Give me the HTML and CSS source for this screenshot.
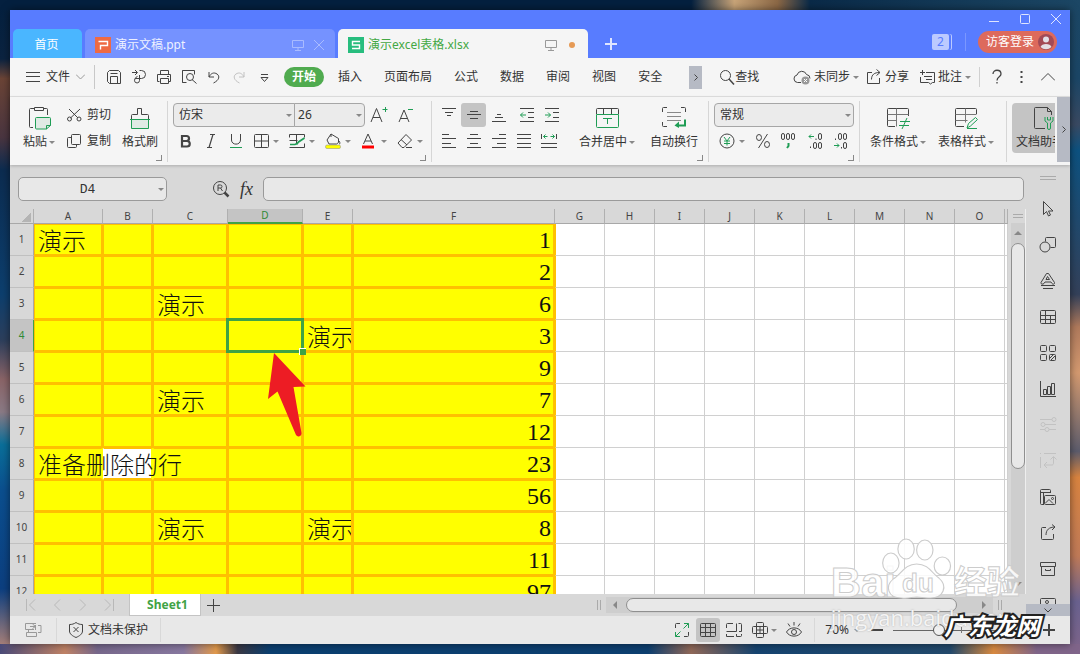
FILE: index.html
```html
<!DOCTYPE html>
<html lang="zh-CN">
<head>
    <meta charset="UTF-8">
    <meta name="viewport" content="width=device-width, initial-scale=1.0">
    <title>演示excel表格.xlsx</title>
    <link rel="stylesheet" href="styles.css">
</head>
<body>
<div class="window">
    <header class="titlebar">
        <div class="doc-tabs">
            <button class="doc-tab home">首页</button>
            <div class="doc-tab ppt">
                <svg width="16" height="16" viewBox="0 0 16 16"><path d="M0 0h16v16H0z" fill="#ee6a44" stroke="none"/><path d="M3.500 4.500h9v4h-7v4" stroke="#fff" stroke-width="1.400"/></svg>
                <span class="doc-name">演示文稿.ppt</span>
                <svg width="12" height="12" viewBox="0 0 12 12"><path d="M.5 1.500h11v7H.5zM6 8.500v3M3 11.500h6"/></svg>
                <svg width="10" height="10" viewBox="0 0 10 10"><path d="M0 0l10 10M10 0L0 10"/></svg>
            </div>
            <div class="doc-tab xlsx">
                <svg width="16" height="16" viewBox="0 0 16 16"><path d="M0 0h16v16H0z" fill="#27bd7e" stroke="none"/><path d="M12 4.500H4.500v3.500h7v3.500H4" stroke="#fff" stroke-width="1.400"/></svg>
                <span class="doc-name">演示excel表格.xlsx</span>
                <svg width="12" height="12" viewBox="0 0 12 12"><path d="M.5 1.500h11v7H.5zM6 8.500v3M3 11.500h6"/></svg>
                <span class="unsaved"></span>
            </div>
            <button class="new-tab" aria-label="新建"><svg width="12" height="12" viewBox="0 0 12 12"><path d="M6 0v12M0 6h12" stroke-width="2"/></svg></button>
        </div>
        <div class="title-right">
            <div class="win-controls">
                <button aria-label="最小化"><svg width="10" height="10" viewBox="0 0 10 10"><path d="M0 7.500h10"/></svg></button>
                <button aria-label="最大化"><svg width="10" height="10" viewBox="0 0 10 10"><rect x=".5" y=".5" width="9" height="9" rx="1"/></svg></button>
                <button aria-label="关闭"><svg width="10" height="10" viewBox="0 0 10 10"><path d="M0 0l10 10M10 0L0 10"/></svg></button>
            </div>
            <div class="account">
                <span class="badge">2</span>
                <button class="login">访客登录
                    <svg width="16" height="16" viewBox="0 0 16 16"><circle cx="8" cy="8" r="8" fill="#a34a56" stroke="none"/><circle cx="8" cy="5.500" r="3" fill="#e3dfe6" stroke="none"/><path d="M2.500 13c1-4 10-4 11 0a8 8 0 0 1-11 0z" fill="#e3dfe6" stroke="none"/></svg>
                </button>
            </div>
        </div>
    </header>

    <nav class="menubar">
        <button class="file-menu">
            <svg width="14" height="10" viewBox="0 0 14 10"><path d="M0 .5h14M0 4.500h14M0 9.500h14"/></svg>
            文件
            <svg class="soft" width="9" height="6" viewBox="0 0 9 6"><path d="M0 .5l4.500 4.500L9 .5"/></svg>
        </button>
        <div class="quick">
            <button aria-label="保存"><svg width="16" height="16" viewBox="0 0 16 16"><path d="M1.500 12.500v-9l2-2h9l2 2v11h-11zM4.500 14.500v-7h7v7M4.500 4.500h7"/></svg></button>
            <button aria-label="输出为PDF"><svg width="16" height="16" viewBox="0 0 16 16"><path d="M1 3.500h5M4 1l2.500 2.500L4 6M8.500 1.500h2a4 4 0 0 1 0 8h-6M6.500 7l-2.500 2.500M8.500 6v5.500a2.500 2.500 0 1 1-3-2.500"/></svg></button>
            <button aria-label="打印"><svg width="16" height="16" viewBox="0 0 16 16"><path d="M4.500 5.500v-4h8v4M3.500 12.500h-2v-7h13v7h-2M4.500 9.500h8v5h-8zM11 7.500h2"/></svg></button>
            <button aria-label="打印预览"><svg width="16" height="16" viewBox="0 0 16 16"><path d="M5.500 13.500h-4v-12h12v4M1.500 1.500v12M11 10.500l4.500 4"/><circle cx="9" cy="8" r="3.500"/></svg></button>
            <button aria-label="撤销"><svg width="16" height="16" viewBox="0 0 16 16"><path d="M3 3v5h5M3 8c2-4 5-5 8-3s2.500 6-3.500 9"/></svg></button>
            <button aria-label="恢复" class="off"><svg width="16" height="16" viewBox="0 0 16 16"><path d="M13 3v5H8M13 8c-2-4-5-5-8-3s-2.500 6 3.500 9"/></svg></button>
            <button aria-label="自定义"><svg width="16" height="16" viewBox="0 0 16 16"><path d="M5 5.500h7M5 8.500l3.500 4 3.500-4z"/></svg></button>
        </div>
        <div class="menus">
            <button class="current">开始</button>
            <button>插入</button>
            <button>页面布局</button>
            <button>公式</button>
            <button>数据</button>
            <button>审阅</button>
            <button>视图</button>
            <button>安全</button>
        </div>
        <button class="more-menus" aria-label="更多"><svg width="4" height="7" viewBox="0 0 4 7"><path d="M.5 .5l3 3-3 3"/></svg></button>
        <button class="find"><svg width="16" height="16" viewBox="0 0 16 16"><circle cx="6.500" cy="6.500" r="5"/><path d="M10 10l5 5.500" stroke-width="1.500"/></svg>查找</button>
        <div class="menu-right">
            <button><svg width="18" height="16" viewBox="0 0 18 16"><path d="M8 13.500H4.500a3.800 3.800 0 0 1-.5-7.500 5 5 0 0 1 9.500-.5 4 4 0 0 1 3.500 4"/><circle cx="12.500" cy="11.500" r="4" fill="#999" stroke="none"/><path d="M11 10l3 3M14 10l-3 3" stroke="#fff"/></svg><span>未同步</span><i class="caret"></i></button>
            <button><svg width="16" height="16" viewBox="0 0 16 16"><path d="M6 3.500H1.500v11h12V9M5.500 10.500c0-5 3-7 8-7M10.500 .5l3.500 3-3.500 3"/></svg><span>分享</span></button>
            <button><svg width="16" height="16" viewBox="0 0 16 16"><path d="M7 3.500h8.500v10h-2l-2 1.500-2-1.500h-8V8M1 3.500h5M3.500 1v5M5 7.500h8M7 10.500h6"/></svg><span>批注</span><i class="caret"></i></button>
            <span class="vline"></span>
            <button aria-label="帮助"><svg width="10" height="16" viewBox="0 0 10 16"><path d="M1 5c0-5 8-5 8 0 0 3-4 2.500-4 6.500M5 13v1.500" stroke-width="1.300"/></svg></button>
            <button aria-label="更多选项"><svg width="3" height="12" viewBox="0 0 3 12"><path d="M1.500 0v2M1.500 5v2M1.500 10v2" stroke-width="2"/></svg></button>
            <button aria-label="收起功能区"><svg width="14" height="8" viewBox="0 0 14 8"><path d="M0 7.500l7-7 7 7"/></svg></button>
        </div>
    </nav>

    <section class="ribbon">
        <div class="group clip launcher">
            <button class="big">
                <svg width="24" height="24" viewBox="0 0 24 24"><path d="M7 2.500H3.500a1 1 0 0 0-1 1v17a1 1 0 0 0 1 1H6M17 2.500h2.500a1 1 0 0 1 1 1V9M7.500 1.500h9v3h-9z"/><path class="g" d="M8.500 12.500a1 1 0 0 1 1-1h13a1 1 0 0 1 1 1v7l-4 3.500h-10a1 1 0 0 1-1-1z" fill="#dfeae4"/><path class="g" d="M23.500 19.500h-4V23"/></svg>
                <span>粘贴<i class="caret"></i></span>
            </button>
            <div class="stack">
                <button class="small"><svg width="16" height="16" viewBox="0 0 16 16"><path d="M3 2l9 9M14 2l-9.500 9"/><circle cx="3.500" cy="12" r="2"/><circle cx="13" cy="12" r="2"/></svg>剪切</button>
                <button class="small"><svg width="16" height="16" viewBox="0 0 16 16"><rect x="5.500" y="1.500" width="9" height="10" rx="1"/><path d="M5.500 4.500h-3a1 1 0 0 0-1 1v8a1 1 0 0 0 1 1h7a1 1 0 0 0 1-1v-2"/></svg>复制</button>
            </div>
            <button class="big">
                <svg width="24" height="24" viewBox="0 0 24 24"><path d="M3.500 13V9.500a1 1 0 0 1 1-1h5v-6h4v6h6a1 1 0 0 1 1 1V13"/><path class="g" d="M3.500 13.500h17v9h-17z" fill="#dfeae4"/><path class="g" d="M2 13.500h20"/></svg>
                <span>格式刷</span>
            </button>
        </div>
        <div class="group font launcher">
            <div class="stack">
                <div class="row">
                    <label class="combo name"><select aria-label="字体"><option>仿宋</option></select></label>
                    <label class="combo size"><select aria-label="字号"><option>26</option></select></label>
                    <button class="tool wide" aria-label="增大字号"><svg width="18" height="18" viewBox="0 0 18 18"><path d="M1 16L6.500 2.500 12 16M3 11.500h7"/><path class="g" d="M12.500 3.500h5M15.500 1v5"/></svg></button>
                    <button class="tool wide" aria-label="减小字号"><svg width="18" height="18" viewBox="0 0 18 18"><path d="M2 16L7 4l5 12M3.500 12.500h7"/><path class="g" d="M11 3.500h5"/></svg></button>
                </div>
                <div class="row">
                    <button class="tool" aria-label="加粗"><svg width="16" height="16" viewBox="0 0 16 16"><path d="M4 3h4.500a2.300 2.300 0 0 1 0 5H4zM4 8h5a2.500 2.500 0 0 1 0 5.500H4z" stroke-width="2.200"/></svg></button>
                    <button class="tool" aria-label="倾斜"><svg width="16" height="16" viewBox="0 0 16 16"><path d="M7 1.500h5M4 14.500h5M10 1.500l-4 13" stroke-width="1.200"/></svg></button>
                    <button class="tool" aria-label="下划线"><svg width="16" height="16" viewBox="0 0 16 16"><path d="M3.500 1v6c0 5.500 9 5.500 9 0V1"/><path class="g" d="M2 14.500h12"/></svg></button>
                    <button class="tool drop" aria-label="边框"><svg width="16" height="16" viewBox="0 0 16 16"><rect x="1.500" y="1.500" width="14" height="13" rx="1"/><path d="M8.500 1.500v13M1.500 8h14"/></svg><i class="caret"></i></button>
                    <button class="tool drop" aria-label="单元格样式"><svg width="16" height="16" viewBox="0 0 16 16"><path d="M15.500 4.500v-3H.5v3M.5 7.500h8M7.500 1.500v9M.5 14.500h15v-4"/><path class="g" d="M1 11.500h5l3-1.500M7.500 11.500l2-2.500 6-4" stroke-width="1.700"/></svg><i class="caret"></i></button>
                    <button class="tool drop" aria-label="填充颜色"><svg width="16" height="16" viewBox="0 0 16 16"><path d="M6 1l7.500 4.500v4l-2 1.500H4L2 7zM6 1v3M14 8c1.500 2 1 3 0 3"/><rect x=".5" y="12" width="15" height="3.500" rx="1.500" fill="#ff0" stroke="#888" stroke-width=".5"/></svg><i class="caret"></i></button>
                    <button class="tool drop" aria-label="字体颜色"><svg width="16" height="16" viewBox="0 0 16 16"><path d="M2.500 11L7 1l4.500 10M4 8h6"/><path d="M1 14h12" stroke="#f00" stroke-width="3"/></svg><i class="caret"></i></button>
                    <button class="tool drop" aria-label="清除"><svg width="16" height="16" viewBox="0 0 16 16"><path d="M9 1.500l5.500 5.500-7.500 7.500H5L1 10zM4 6.500l6 5.500M9 14.500h6"/></svg><i class="caret"></i></button>
                </div>
            </div>
        </div>
        <div class="group align launcher">
            <div class="stack">
                <div class="row">
                    <button class="tool" aria-label="顶端对齐"><svg width="16" height="16" viewBox="0 0 16 16"><path d="M1 1.500h14M4 5.500h8M6 8.500h4"/></svg></button>
                    <button class="tool on" aria-label="垂直居中"><svg width="16" height="16" viewBox="0 0 16 16"><path d="M4 4.500h8M1 7.500h14M4 11.500h8"/></svg></button>
                    <button class="tool" aria-label="底端对齐"><svg width="16" height="16" viewBox="0 0 16 16"><path d="M6 7.500h4M4 10.500h8M1 14.500h14"/></svg></button>
                    <button class="tool apart" aria-label="减少缩进"><svg width="16" height="16" viewBox="0 0 16 16"><path d="M1 1.500h14M9 5.500h6M9 10.500h6M1 14.500h14"/><path class="g" d="M7 8H1.500M4 5.500L1.500 8 4 10.500"/></svg></button>
                    <button class="tool" aria-label="增加缩进"><svg width="16" height="16" viewBox="0 0 16 16"><path d="M1 1.500h14M9 5.500h6M9 10.500h6M1 14.500h14"/><path class="g" d="M1 8h5.500M4 5.500L6.500 8 4 10.500"/></svg></button>
                </div>
                <div class="row">
                    <button class="tool" aria-label="左对齐"><svg width="16" height="16" viewBox="0 0 16 16"><path d="M1 1.500h7M1 5.500h14M1 10.500h9M1 14.500h14"/></svg></button>
                    <button class="tool" aria-label="水平居中"><svg width="16" height="16" viewBox="0 0 16 16"><path d="M4 1.500h8M1 5.500h14M4 10.500h8M1 14.500h14"/></svg></button>
                    <button class="tool" aria-label="右对齐"><svg width="16" height="16" viewBox="0 0 16 16"><path d="M8 1.500h7M1 5.500h14M6 10.500h9M1 14.500h14"/></svg></button>
                    <button class="tool" aria-label="两端对齐"><svg width="16" height="16" viewBox="0 0 16 16"><path d="M1 1.500h14M1 5.500h14M1 10.500h14M1 14.500h14"/></svg></button>
                    <button class="tool" aria-label="分散对齐"><svg width="16" height="16" viewBox="0 0 16 16"><path d="M.5 1v5M15.500 1v5M0 10.500h16M0 14.500h16"/><path class="g" d="M2.500 3.500h4M9.500 3.500h4M4.500 1.500l-2 2 2 2M11.500 1.500l2 2-2 2"/></svg></button>
                </div>
            </div>
            <button class="big">
                <svg width="24" height="24" viewBox="0 0 24 24"><path d="M1.500 8V3.500a1 1 0 0 1 1-1h20a1 1 0 0 1 1 1V8M8.500 2.500V8M16.500 2.500V8"/><path class="g" d="M1.500 8.500h22v12a1 1 0 0 1-1 1h-20a1 1 0 0 1-1-1zM8 12.500h9M12.500 12.500V18"/></svg>
                <span>合并居中<i class="caret"></i></span>
            </button>
            <button class="big">
                <svg width="24" height="24" viewBox="0 0 24 24"><path d="M.5 6V2.500a1 1 0 0 1 1-1H5M19 1.500h3.500a1 1 0 0 1 1 1V6M.5 16v3.500a1 1 0 0 0 1 1H5"/><path d="M5 6.500h14M5 10.500h14M5 14.500h14" stroke="#888"/><path class="g" d="M23 13.500v6h-7" stroke-width="2"/><path d="M12.500 19.500l4.500-4v6.500z" fill="#1f9d55" stroke="none"/></svg>
                <span>自动换行</span>
            </button>
        </div>
        <div class="group number launcher">
            <div class="stack">
                <div class="row">
                    <label class="combo format"><select aria-label="数字格式"><option>常规</option></select></label>
                </div>
                <div class="row">
                    <button class="tool drop" aria-label="货币"><svg width="16" height="16" viewBox="0 0 16 16"><circle cx="8" cy="8" r="7"/><path class="g" d="M5 4l3 4 3-4M8 8v4.500M5 8h6M5 10.500h6"/></svg><i class="caret"></i></button>
                    <button class="tool" aria-label="百分比"><svg width="16" height="16" viewBox="0 0 16 16"><ellipse cx="4" cy="4.500" rx="2.500" ry="3"/><ellipse cx="12" cy="11.500" rx="2.500" ry="3"/><path d="M12.500 1l-9 14"/></svg></button>
                    <button class="tool" aria-label="千位分隔"><svg width="16" height="16" viewBox="0 0 16 16"><rect x="1.500" y=".5" width="3" height="6" rx="1.500"/><rect x="6.500" y=".5" width="3" height="6" rx="1.500"/><rect x="11.500" y=".5" width="3" height="6" rx="1.500"/><path class="g" d="M8.500 10v3l-1.500 2" stroke-width="2"/></svg></button>
                    <button class="tool apart" aria-label="增加小数位数"><svg width="16" height="16" viewBox="0 0 16 16"><rect x="10.500" y=".5" width="3" height="6" rx="1.500"/><path d="M8 5.500v1.500M2.500 13.500V15"/><rect x="5.500" y="9.500" width="3" height="6" rx="1.500"/><rect x="10.500" y="9.500" width="3" height="6" rx="1.500"/><path class="g" d="M6 3.500H1M3 1.500l-2 2 2 2"/></svg></button>
                    <button class="tool" aria-label="减少小数位数"><svg width="16" height="16" viewBox="0 0 16 16"><rect x="5.500" y=".5" width="3" height="6" rx="1.500"/><rect x="10.500" y=".5" width="3" height="6" rx="1.500"/><path d="M2.500 5.500v1.500M8.500 14v1.500"/><rect x="10.500" y="9.500" width="3" height="6" rx="1.500"/><path class="g" d="M1 12.500h5M4 10.500l2 2-2 2"/></svg></button>
                </div>
            </div>
        </div>
        <div class="group style">
            <button class="big">
                <svg width="24" height="24" viewBox="0 0 24 24"><path d="M22.500 10V3.500a1 1 0 0 0-1-1h-19a1 1 0 0 0-1 1v16a1 1 0 0 0 1 1H9"/><path d="M1.500 8.500h21M1.500 14.500h9M10.500 2.500v18" stroke="#777"/><path class="g" d="M14 15.500h10M13 19.500h10M21 12l-5 11"/></svg>
                <span>条件格式<i class="caret"></i></span>
            </button>
            <button class="big">
                <svg width="24" height="24" viewBox="0 0 24 24"><path d="M22.500 8V3.500a1 1 0 0 0-1-1h-19a1 1 0 0 0-1 1v16a1 1 0 0 0 1 1H10"/><path d="M1.500 8.500h21M1.500 14.500h12M11.500 2.500v14" stroke="#777"/><path class="g" d="M13 22l1.500-4.500 7-6 2 2-7 6.500zM13 22.500h10"/></svg>
                <span>表格样式<i class="caret"></i></span>
            </button>
        </div>
        <div class="assist">
            <button class="big">
                <svg width="24" height="24" viewBox="0 0 24 24"><path d="M13 22.500H3.500a1 1 0 0 1-1-1v-19a1 1 0 0 1 1-1h12l4 4V9M15.500 1.500v4h4"/><path class="g" d="M13 11v4l2.500 2v5a1.500 1.500 0 0 0 3 0v-5l2.500-2v-4M15.500 11v3h3v-3"/></svg>
                <span>文档助手<i class="caret"></i></span>
            </button>
        </div>
        <button class="ribbon-next" aria-label="向右滚动"><svg width="4" height="7" viewBox="0 0 4 7"><path d="M.5 .5l3 3-3 3"/></svg></button>
    </section>

    <div class="work">
        <main class="main">
            <div class="formula-bar">
                <label class="namebox"><input type="text" value="D4" aria-label="名称框"></label>
                <button class="look" aria-label="浏览公式"><svg width="18" height="18" viewBox="0 0 18 18"><circle cx="8" cy="8" r="6.500"/><path d="M6 11V5h2.500a1.500 1.500 0 0 1 0 3H6M8.500 8l2 3"/><path d="M12.500 12.500l4 4" stroke-width="2.500"/></svg></button>
                <button class="fx">fx</button>
                <input class="formula" type="text" aria-label="编辑栏">
            </div>
            <div class="sheet">
                <div class="grid">
                    <table>
                        <colgroup>
                            <col class="c-head"><col class="c-a"><col class="c-s"><col class="c-m"><col class="c-m"><col class="c-s"><col class="c-f">
                            <col class="c-s"><col class="c-s"><col class="c-s"><col class="c-s"><col class="c-s"><col class="c-s"><col class="c-s"><col class="c-s"><col class="c-s"><col>
                        </colgroup>
                        <thead>
                            <tr><th class="corner"></th><th>A</th><th>B</th><th>C</th><th class="sel">D</th><th>E</th><th>F</th><th>G</th><th>H</th><th>I</th><th>J</th><th>K</th><th>L</th><th>M</th><th>N</th><th>O</th><th></th></tr>
                        </thead>
                        <tbody>
                            <tr><th>1</th><td class="y">演示</td><td class="y"></td><td class="y"></td><td class="y"></td><td class="y"></td><td class="y num">1</td><td></td><td></td><td></td><td></td><td></td><td></td><td></td><td></td><td></td><td></td></tr>
                            <tr><th>2</th><td class="y"></td><td class="y"></td><td class="y"></td><td class="y"></td><td class="y"></td><td class="y num">2</td><td></td><td></td><td></td><td></td><td></td><td></td><td></td><td></td><td></td><td></td></tr>
                            <tr><th>3</th><td class="y"></td><td class="y"></td><td class="y">演示</td><td class="y"></td><td class="y"></td><td class="y num">6</td><td></td><td></td><td></td><td></td><td></td><td></td><td></td><td></td><td></td><td></td></tr>
                            <tr><th class="sel">4</th><td class="y"></td><td class="y"></td><td class="y"></td><td class="y active"></td><td class="y cut">演示</td><td class="y num">3</td><td></td><td></td><td></td><td></td><td></td><td></td><td></td><td></td><td></td><td></td></tr>
                            <tr><th>5</th><td class="y"></td><td class="y"></td><td class="y"></td><td class="y"></td><td class="y"></td><td class="y num">9</td><td></td><td></td><td></td><td></td><td></td><td></td><td></td><td></td><td></td><td></td></tr>
                            <tr><th>6</th><td class="y"></td><td class="y"></td><td class="y">演示</td><td class="y"></td><td class="y"></td><td class="y num">7</td><td></td><td></td><td></td><td></td><td></td><td></td><td></td><td></td><td></td><td></td></tr>
                            <tr><th>7</th><td class="y"></td><td class="y"></td><td class="y"></td><td class="y"></td><td class="y"></td><td class="y num">12</td><td></td><td></td><td></td><td></td><td></td><td></td><td></td><td></td><td></td><td></td></tr>
                            <tr><th>8</th><td class="y spill">准备删除的行</td><td class="y blank"></td><td class="y after"></td><td class="y"></td><td class="y"></td><td class="y num">23</td><td></td><td></td><td></td><td></td><td></td><td></td><td></td><td></td><td></td><td></td></tr>
                            <tr><th>9</th><td class="y"></td><td class="y"></td><td class="y"></td><td class="y"></td><td class="y"></td><td class="y num">56</td><td></td><td></td><td></td><td></td><td></td><td></td><td></td><td></td><td></td><td></td></tr>
                            <tr><th>10</th><td class="y"></td><td class="y"></td><td class="y">演示</td><td class="y"></td><td class="y cut">演示</td><td class="y num">8</td><td></td><td></td><td></td><td></td><td></td><td></td><td></td><td></td><td></td><td></td></tr>
                            <tr><th>11</th><td class="y"></td><td class="y"></td><td class="y"></td><td class="y"></td><td class="y"></td><td class="y num">11</td><td></td><td></td><td></td><td></td><td></td><td></td><td></td><td></td><td></td><td></td></tr>
                            <tr><th>12</th><td class="y"></td><td class="y"></td><td class="y"></td><td class="y"></td><td class="y"></td><td class="y num">97</td><td></td><td></td><td></td><td></td><td></td><td></td><td></td><td></td><td></td><td></td></tr>
                        </tbody>
                    </table>
                    <!-- arrow pointing at the active cell -->
                    <svg class="pointer" width="40" height="84" viewBox="0 0 40 84"><path d="M7 0l31.500 33.500-12 .5 8 46a3 3 0 0 1-5.500 2L10.500 38.500 1 46z"/></svg>
                </div>
                <div class="vscroll">
                    <span class="split"></span>
                    <div class="track">
                        <i class="tri up"></i>
                        <span class="thumb"></span>
                        <i class="tri down"></i>
                    </div>
                </div>
            </div>
            <div class="sheet-bar">
                <div class="sheet-nav">
                    <button aria-label="第一个"><svg width="12" height="12" viewBox="0 0 12 12"><path d="M1.500 0v12M10 .5L4.500 6l5.500 5.500"/></svg></button>
                    <button aria-label="上一个"><svg width="12" height="12" viewBox="0 0 12 12"><path d="M9 .5L3.500 6 9 11.500"/></svg></button>
                    <button aria-label="下一个"><svg width="12" height="12" viewBox="0 0 12 12"><path d="M3 .5L8.500 6 3 11.500"/></svg></button>
                    <button aria-label="最后一个"><svg width="12" height="12" viewBox="0 0 12 12"><path d="M10.500 0v12M2 .5L7.500 6 2 11.500"/></svg></button>
                </div>
                <button class="sheet-tab">Sheet1</button>
                <button class="add-sheet" aria-label="新建工作表"><svg width="13" height="13" viewBox="0 0 13 13"><path d="M6.500 0v13M0 6.500h13"/></svg></button>
                <div class="hscroll">
                    <span class="grip"></span>
                    <div class="track">
                        <i class="tri left"></i>
                        <span class="thumb"></span>
                        <i class="tri right"></i>
                    </div>
                    <span class="grip"></span>
                </div>
            </div>
        </main>
        <aside class="side">
            <span class="split"></span>
            <div class="side-tools">
                <button aria-label="选择"><svg width="18" height="18" viewBox="0 0 18 18"><path d="M4.500 1.500v13l3-3 2 4.500 2-1-2-4h4.500z"/></svg></button>
                <button aria-label="形状"><svg width="18" height="18" viewBox="0 0 18 18"><circle cx="6" cy="11" r="5"/><path d="M6.500 5.500v-3a1 1 0 0 1 1-1h8a1 1 0 0 1 1 1v8a1 1 0 0 1-1 1h-4"/></svg></button>
                <button aria-label="艺术字"><svg width="18" height="18" viewBox="0 0 18 18"><path d="M2 10.500L7.500 1.500h2l6 9c.5 2-2 2-2.500 1l-1-1.500H6L5 11.500c-1 1-3.500 1-3-1zM7 7.500l1.500-3 2 3zM2 13.500h14M4 16.500h10"/></svg></button>
                <button aria-label="表格"><svg width="18" height="18" viewBox="0 0 18 18"><rect x="1.500" y="2.500" width="15" height="13" rx="1"/><path d="M1.500 7.500h15M1.500 11.500h15M6.500 2.500v13M11.500 7.500v8"/></svg></button>
                <button aria-label="图标库"><svg width="18" height="18" viewBox="0 0 18 18"><rect x="1.500" y="1.500" width="6" height="6" rx="1"/><rect x="10.500" y="1.500" width="6" height="6" rx="1"/><rect x="1.500" y="10.500" width="6" height="6" rx="1"/><rect x="10.500" y="10.500" width="6" height="6" rx="1"/><path d="M11 14l3-3M12 16l4-4"/></svg></button>
                <button aria-label="图表"><svg width="18" height="18" viewBox="0 0 18 18"><path d="M1.500 1v15.500H17M4.500 14.500v-5h3v5zM8.500 14.500v-8h3v8zM12.500 14.500v-11h3v11z"/></svg></button>
                <button aria-label="属性" class="off"><svg width="18" height="18" viewBox="0 0 18 18"><path d="M1 3.500h12M6 8.500h11M1 13.500h5M10 13.500h7"/><circle cx="15" cy="3.500" r="2"/><circle cx="4" cy="8.500" r="2"/><circle cx="8" cy="13.500" r="2"/></svg></button>
                <button aria-label="转换" class="off"><svg width="18" height="18" viewBox="0 0 18 18"><path d="M1.500 5v11M5 1.500h12M1 1.500h1M5.500 13h7.500c1 0 1.500-1 1.500-2V5M11.500 7.500l3-3 3 3M8 10l-3 3 3 3"/></svg></button>
                <button aria-label="图片"><svg width="18" height="18" viewBox="0 0 18 18"><path d="M5 16.500H2.500a1 1 0 0 1-1-1v-13a1 1 0 0 1 1-1h8a1 1 0 0 1 1 1V5M1.500 4.500h10M4.500 4.500v12"/><rect x="5.500" y="7.500" width="11" height="9" rx="1"/><path d="M6 15.500l4-4 4 4"/><circle cx="13.500" cy="10.500" r="1"/></svg></button>
                <button aria-label="分享"><svg width="18" height="18" viewBox="0 0 18 18"><path d="M7 3.500H3.500a1 1 0 0 0-1 1v10a1 1 0 0 0 1 1h10a1 1 0 0 0 1-1V10M7 11c0-5 3-8 9-8M13 .5l3 2.500-3 3"/></svg></button>
                <button aria-label="备份"><svg width="18" height="18" viewBox="0 0 18 18"><path d="M1.500 2.500h15v4h-15zM2.500 6.500v9h13v-9M6.500 9v1.500h5V9"/></svg></button>
                <button aria-label="联系人"><svg width="18" height="18" viewBox="0 0 18 18"><rect x="1.500" y="2.500" width="15" height="13" rx="1"/><circle cx="8" cy="6" r="1.500"/></svg></button>
            </div>
            <button class="side-more" aria-label="向下滚动"><svg width="8" height="5" viewBox="0 0 8 5"><path d="M.5 .5L4 4 7.500 .5"/></svg></button>
        </aside>
    </div>

    <footer class="status">
        <div class="cell"><svg class="soft" width="18" height="16" viewBox="0 0 18 16"><path d="M12 1.500H1.500v6H10M6 4.500h5M8.500 2l3 2.500-3 2M4.500 7.500v3M2.500 10.500h10v4h-10zM11.500 3v5M14 3.500h3v7h-3"/></svg></div>
        <div class="cell"><svg width="16" height="16" viewBox="0 0 16 16"><path d="M8 .5c2 1.500 4 2 6.500 2V9c0 3-3 5-6.500 6.500C4.500 14 1.500 12 1.500 9V2.500C4 2.500 6 2 8 .5zM5.500 5l5 5M10.500 5l-5 5"/></svg><span>文档未保护</span></div>
        <div class="views">
            <button aria-label="全屏"><svg width="16" height="16" viewBox="0 0 16 16"><path d="M6 1.500H2.500a1 1 0 0 0-1 1V6M14.500 10v3.500a1 1 0 0 1-1 1H10"/><path class="g" d="M10 1.500h4.500V6M14.500 1.500l-5 5M6 14.500H1.500V10M1.500 14.500l5-5"/></svg></button>
            <button class="on" aria-label="普通视图"><svg width="16" height="16" viewBox="0 0 16 16"><rect x=".5" y="1.500" width="15" height="13" rx="1"/><path d="M.5 5.500h15M.5 10.500h15M5.500 1.500v13M10.500 1.500v13"/></svg></button>
            <button aria-label="分页预览"><svg width="16" height="16" viewBox="0 0 16 16"><path d="M.5 6V2.500a1 1 0 0 1 1-1H7M.5 9.500h10v-8M12.500 1.500h2a1 1 0 0 1 1 1v7h-2.500M.5 12v2.500H8M10.500 12v2.500h4a1 1 0 0 0 1-1V12"/></svg></button>
            <button class="drop" aria-label="阅读模式"><svg width="16" height="16" viewBox="0 0 16 16"><rect x="4.500" y=".5" width="7" height="15" rx="1"/><rect x=".5" y="4.500" width="15" height="7" rx="1"/><path d="M8 4.500v7M4.500 8h7"/></svg><i class="caret"></i></button>
            <button aria-label="护眼模式"><svg width="16" height="16" viewBox="0 0 16 16"><path d="M.5 10c3-5.500 12-5.500 15 0-3 5.500-12 5.500-15 0zM8 0v3.500M2 1.500l2 3M14 1.500l-2 3"/><circle cx="8" cy="10" r="2.500"/></svg></button>
        </div>
        <div class="zoom">
            <button class="percent">70%<i class="caret"></i></button>
            <button aria-label="缩小"><svg width="12" height="12" viewBox="0 0 12 12"><path d="M0 6h12" stroke-width="2"/></svg></button>
            <input type="range" min="0" max="100" value="31" aria-label="显示比例">
            <button aria-label="放大"><svg width="12" height="12" viewBox="0 0 12 12"><path d="M0 6h12M6 0v12" stroke-width="2"/></svg></button>
        </div>
    </footer>
</div>

<div class="baidu">
    <div class="logo">
        <span>Bai</span>
        <svg width="78" height="64" viewBox="0 0 78 64"><g class="paw" transform="scale(1.170 1)"><ellipse cx="11" cy="25" rx="7" ry="10"/><ellipse cx="24" cy="11" rx="7" ry="10"/><ellipse cx="40" cy="12" rx="7" ry="10"/><ellipse cx="55" cy="28" rx="7" ry="9"/><path d="M33 26c10 0 13 9 19 14 8 8 4 20-7 20-6 0-8-1-12-1s-7 2-13 1C8 60 6 48 13 41c7-5 10-15 20-15z"/></g><text x="40" y="54" text-anchor="middle">du</text></svg>
        <span class="cn">经验</span>
    </div>
    <div class="url">jingyan.baidu.com</div>
</div>
<div class="site-mark">广东龙网</div>
</body>
</html>
```
FILE: styles.css
```css
*{
    box-sizing: border-box;
}
body{
    margin: 0;
    padding: 10px;
    height: 100vh;
    overflow: hidden;
    font-family: "Noto Sans", "Noto Sans CJK SC", sans-serif;
    font-size: 12px;
    line-height: 16px;
    color: #333;
    /* desktop wallpaper, only the rim shows */
    background:
        linear-gradient(90deg, #04203f 64%, #c8a478 68%, #8c6846 72%, #0a2a48 75%, #1c4765) top / 100% 10px no-repeat,
        linear-gradient(90deg, #4a4a78 0, #c08265 6%, #77688c 9%, #8878a0 17%, #e29a4c 20%, #3a3844 22%, #0b3f70 25%, #0d3f70 60%, #906858 64%, #164470 70%, #234a6c 88%, #d98a40 92%, #80658a 96%) bottom / 100% 10px no-repeat,
        linear-gradient(#04203f 0, #0b2340 9%, #6b4436 12%, #4a3540 21%, #0c2c50 26%, #0d3f6e 45%, #2d3f5c 52%, #8a6467 58%, #8a7a85 63%, #0a6f9a 68%, #0b4f8f 75%, #0c3f80 90%, #c08a78 100%) left / 10px 100% no-repeat,
        linear-gradient(#1c4765 0, #1b4666 12%, #3a4a62 19%, #0d5280 23%, #34415a 45%, #b07a5c 50%, #d49a70 57%, #5c5c6c 69%, #d98440 73%, #c07a58 85%, #6a6290 92%, #80658a 100%) right / 10px 100% no-repeat;
}
button{
    display: flex;
    align-items: center;
    justify-content: center;
    padding: 0;
    border: none;
    background: none;
    font: inherit;
    color: inherit;
    white-space: nowrap;
}
input, select{
    font: inherit;
    color: inherit;
    margin: 0;
    outline: none;
}
svg{
    display: block;
    flex: none;
    fill: none;
    stroke: #444;
}
svg .g{
    stroke: #1f9d55;
}
svg.soft{
    stroke: #999;
}
.caret{
    display: inline-block;
    flex: none;
    border: 3px solid transparent;
    border-top-color: #888;
    border-bottom: none;
}
.window{
    display: flex;
    flex-direction: column;
    height: 100%;
    background-color: #d8d8d8;
    box-shadow: 0 0 8px rgba(0,0,0,0.5);
}

/* title bar */
.titlebar{
    display: flex;
    justify-content: space-between;
    height: 48px;
    background-color: #587cff;
}
.doc-tabs{
    display: flex;
    align-items: flex-end;
    gap: 3px;
    padding-left: 3px;
}
.doc-tab{
    display: flex;
    align-items: center;
    height: 29px;
    border-radius: 5px 5px 0 0;
}
.doc-tab.home{
    width: 69px;
    padding: 2px 2px 0 0;
    background-color: #4ab6ff;
    color: white;
}
.ppt, .xlsx{
    width: 250px;
    padding: 2px 11px 0 10px;
    background-color: #7592ff;
    color: #eef1ff;
}
.ppt svg{
    stroke: #a9bbff;
}
.ppt svg + svg{
    margin-left: 10px;
}
.xlsx{
    background-color: #f5f5f5;
    color: #43a843;
}
.xlsx svg{
    stroke: #999;
}
.doc-name{
    flex: 1;
    padding-left: 4px;
}
.unsaved{
    width: 6px;
    height: 6px;
    margin: 0 2px 0 12px;
    border-radius: 50%;
    background-color: #e69a55;
}
.new-tab{
    width: 40px;
    height: 29px;
}
.new-tab svg, .win-controls svg{
    stroke: #dfe5ff;
}
.title-right{
    display: flex;
    flex-direction: column;
    align-items: flex-end;
    padding-right: 9px;
}
.win-controls{
    display: flex;
    gap: 21px;
    height: 18px;
}
.account{
    display: flex;
    align-items: center;
    padding: 3px 4px 0 0;
}
.badge{
    width: 17px;
    margin-right: 16px;
    border-radius: 2px;
    background-color: #bccaff;
    color: #587cff;
    text-align: center;
    box-shadow: 2px 0 0 #587cff, 3px 0 0 #bccaff;
}
.login{
    order: 2;
    gap: 4px;
    height: 22px;
    margin-left: 12px;
    padding: 0 3px 0 8px;
    border-radius: 11px;
    background-color: #dd6a5c;
    color: #fff;
}
.account::after{
    content: "";
    order: 1;
    width: 1px;
    height: 18px;
    background-color: #7b97ff;
}

/* menu bar */
.menubar{
    display: flex;
    align-items: center;
    height: 39px;
    padding: 0 15px;
    border-bottom: 1px solid #e2e2e2;
    background-color: #f5f5f5;
}
.file-menu{
    gap: 6px;
    height: 24px;
    padding-right: 9px;
    padding-left: 1px;
    border-right: 1px solid #c8c8c8;
}
.quick{
    display: flex;
    padding-left: 6px;
}
.quick button{
    width: 25px;
}
.off svg{
    stroke: #c2c2c2;
}
.menus{
    display: flex;
    align-items: center;
    padding-left: 5px;
}
.menus button{
    height: 20px;
    padding: 0 11px;
}
.menus .current{
    margin: 0 3px;
    padding: 0 8px;
    border-radius: 10px;
    background-color: #50ab4f;
    color: white;
    font-weight: bold;
}
.more-menus{
    width: 13px;
    height: 23px;
    margin-left: 16px;
    background-color: #b6bac4;
}
.find{
    margin-left: 17px;
}
.menu-right{
    display: flex;
    align-items: center;
    margin-left: auto;
}
.menu-right button span{
    padding: 0 3px;
}
.menu-right button + button{
    margin-left: 7px;
}
.vline{
    width: 1px;
    height: 20px;
    margin: 0 12px 0 8px;
    background-color: #d0d0d0;
}
.menu-right .vline ~ button + button{
    margin-left: 18px;
}

/* ribbon */
.ribbon{
    display: flex;
    align-items: flex-start;
    height: 68px;
    background-color: #f5f5f5;
    box-shadow: 0 1px 3px rgba(0,0,0,0.2);
    position: relative;
}
.group{
    position: relative;
    display: flex;
    flex: none;
    height: 61px;
    margin-top: 4px;
    padding-top: 2px;
    border-right: 1px solid #d6d6d6;
}
.launcher::after{
    content: "";
    position: absolute;
    right: 5px;
    bottom: 1px;
    width: 5px;
    height: 5px;
    border: solid #888;
    border-width: 0 1px 1px 0;
}
.clip{
    gap: 11px;
    padding-left: 13px;
    padding-right: 9px;
}
.font{
    padding-left: 5px;
    padding-right: 3px;
}
.align{
    gap: 15px;
    padding-left: 4px;
    padding-right: 10px;
}
.number{
    padding-left: 5px;
    padding-right: 5px;
}
.style{
    gap: 12px;
    padding-left: 10px;
    padding-right: 12px;
}
.stack{
    display: flex;
    flex-direction: column;
    gap: 2px;
}
.row{
    display: flex;
    align-items: center;
    height: 24px;
}
.big{
    flex: none;
    flex-direction: column;
    gap: 4px;
    height: 50px;
}
.big span{
    display: flex;
    align-items: center;
    gap: 2px;
}
.small{
    gap: 5px;
    height: 24px;
}
.tool{
    width: 25px;
    height: 24px;
    border-radius: 3px;
}
.tool.wide{
    width: 27px;
}
.tool.drop{
    gap: 4px;
    width: 36px;
}
.tool.apart{
    margin-left: 3px;
}
.on{
    background-color: #c4c4c4;
}
.combo{
    position: relative;
    display: block;
}
.combo select{
    appearance: none;
    display: block;
    width: 100%;
    height: 24px;
    padding: 0 5px;
    border: 1px solid #a6a6a6;
    border-radius: 4px;
    background-color: #ebebeb;
}
.combo::after, .namebox::after{
    content: "";
    position: absolute;
    right: 3px;
    top: 11px;
    border: 3px solid transparent;
    border-top-color: #888;
    border-bottom: none;
}
.name{
    width: 122px;
}
.name select{
    border-radius: 4px 0 0 4px;
}
.size{
    width: 71px;
    margin-left: -1px;
}
.size select{
    padding: 0 3px;
    border-radius: 0 4px 4px 0;
}
.format{
    width: 140px;
}
.assist{
    flex: 1;
    display: flex;
    min-width: 0;
    overflow: hidden;
    margin: 6px 2px 0 5px;
    border-radius: 4px 0 0 4px;
    background-color: #c4c4c4;
}
.assist .big{
    padding-left: 4px;
}
.ribbon-next{
    width: 13px;
    height: 65px;
    background-color: #b6bac4;
}

/* work area */
.work{
    display: flex;
    flex: 1;
    min-height: 0;
}
.main{
    display: flex;
    flex-direction: column;
    flex: 1;
    min-width: 0;
}
.formula-bar{
    display: flex;
    align-items: center;
    height: 44px;
    padding: 4px 2px 0 8px;
}
.namebox{
    position: relative;
}
.namebox input, .formula{
    display: block;
    height: 24px;
    border: 1px solid #9a9a9a;
    border-radius: 5px;
    background-color: #e8e8e8;
}
.namebox input{
    width: 149px;
    padding-right: 12px;
    font-family: "Liberation Mono", monospace;
    font-size: 13px;
    text-align: center;
}
.look{
    margin-left: 45px;
}
.fx{
    width: 33px;
    font-family: "Liberation Serif", serif;
    font-style: italic;
    font-size: 18px;
}
.formula{
    flex: 1;
    min-width: 0;
}
.sheet{
    display: flex;
    flex: 1;
    min-height: 0;
}
.grid{
    position: relative;
    flex: 1;
    min-width: 0;
    overflow: hidden;
    background-color: white;
}
table{
    width: 100%;
    table-layout: fixed;
    border-collapse: separate;
    border-spacing: 0;
}
.c-head{ width: 24px; }
.c-a{ width: 69px; }
.c-s{ width: 50px; }
.c-m{ width: 75px; }
.c-f{ width: 202px; }
th{
    padding: 0;
    background-color: #d8d8d8;
    font-size: 10px;
    font-weight: normal;
    line-height: 13px;
    color: #444;
}
thead th{
    height: 15px;
    border-right: 1px solid #b0b0b0;
    border-bottom: 1px solid #a8a8a8;
}
thead .corner{
    background-image: linear-gradient(135deg, transparent 50%, #b4b4b4 50%);
    background-size: 10px 9px;
    background-position: 11px 4px;
    background-repeat: no-repeat;
}
thead .sel{
    background-color: #c4c4c4;
    border-bottom: 2px solid #3fa345;
    color: #2f8a36;
}
tbody th{
    height: 32px;
    border-right: 1px solid #a8a8a8;
    border-bottom: 1px solid #c0c0c0;
}
tbody .sel{
    background-color: #c4c4c4;
    border-right-color: #3fa345;
    color: #2f8a36;
}
td{
    height: 32px;
    padding: 0 2px 0 3px;
    border-right: 1px solid #d0d0d0;
    border-bottom: 1px solid #d0d0d0;
    font-family: "Noto Sans CJK SC", sans-serif;
    font-size: 24px;
    font-weight: 300;
    line-height: 28px;
    color: #111;
    white-space: nowrap;
}
.y{
    border: solid #ffc000;
    border-width: 1px 2px 2px 1px;
    background-color: #ff0;
}
.num{
    padding-top: 1px;
    font-family: "Liberation Serif", serif;
    text-align: right;
}
.num + td{
    border-left: 1px solid #ffc000;
}
.cut{
    overflow: hidden;
}
.spill{
    border-right-color: #ff0;
}
.blank{
    border-left-color: white;
    border-right-color: #ff0;
    background-color: white;
}
.after{
    border-left-color: #ff0;
}
.active{
    position: relative;
}
.active::before{
    content: "";
    position: absolute;
    inset: -3px;
    border: 3px solid #3fa345;
}
.active::after{
    content: "";
    position: absolute;
    right: -5px;
    bottom: -5px;
    width: 6px;
    height: 6px;
    border: solid white;
    border-width: 1px 0 0 1px;
    background-color: #3fa345;
}
.pointer{
    position: absolute;
    left: 257px;
    top: 144px;
    fill: #ed1c24;
    stroke: none;
}
.vscroll{
    display: flex;
    flex-direction: column;
    width: 18px;
    padding-left: 3px;
    border-right: 1px solid #eee;
}
.vscroll .split{
    margin: 5px auto;
}
.split{
    flex: none;
    width: 10px;
    height: 4px;
    border: solid #aaa;
    border-width: 1px 0;
}
.track{
    display: flex;
    flex: 1;
    align-items: center;
    background-color: #cecece;
}
.vscroll .track{
    flex-direction: column;
    padding: 8px 0;
}
.thumb{
    border: 1px solid #8f8f8f;
    border-radius: 7px;
    background-color: #e8e8e8;
}
.vscroll .thumb{
    width: 14px;
    height: 226px;
    margin-top: 8px;
}
.tri{
    border: 4px solid transparent;
}
.up{
    border-top: none;
    border-bottom-color: #888;
}
.down{
    margin-top: auto;
    border-bottom: none;
    border-top-color: #888;
}
.left{
    border-left: none;
    border-right-color: #888;
}
.right{
    margin-left: auto;
    border-right: none;
    border-left-color: #888;
}

/* sheet tabs */
.sheet-bar{
    display: flex;
    height: 22px;
}
.sheet-nav{
    display: flex;
    align-items: center;
    gap: 14px;
    width: 119px;
    padding-left: 15px;
}
.sheet-nav svg{
    stroke: #b8b8b8;
}
.sheet-tab{
    width: 72px;
    height: 22px;
    padding-left: 5px;
    border: solid #c4c4c4;
    border-width: 0 1px 1px;
    background-color: white;
    color: #3fa345;
    font-weight: bold;
}
.add-sheet{
    width: 25px;
}
.hscroll{
    display: flex;
    align-items: center;
    width: 429px;
    margin-left: auto;
    padding-right: 24px;
}
.hscroll .track{
    height: 16px;
    margin: 0 5px;
    padding: 0 7px;
}
.hscroll .thumb{
    width: 331px;
    height: 14px;
    margin-left: 9px;
}
.grip{
    width: 4px;
    height: 10px;
    border: solid #aaa;
    border-width: 0 1px;
}

/* right side tools */
.side{
    display: flex;
    flex-direction: column;
    align-items: center;
    width: 44px;
    padding-top: 11px;
}
.side .split{
    width: 16px;
}
.side-tools{
    flex: 1;
    min-height: 0;
    overflow: hidden;
    padding-top: 11px;
}
.side-tools button{
    width: 36px;
    height: 36px;
}
.side-more{
    align-self: stretch;
    height: 12px;
    background-color: #b6bac4;
}

/* status bar */
.status{
    display: flex;
    align-items: center;
    height: 28px;
    padding-right: 15px;
    background-color: #e8e8e8;
}
.cell{
    display: flex;
    align-items: center;
    gap: 4px;
    height: 24px;
    padding: 0 12px 0 11px;
    border-right: 1px solid #d8d8d8;
}
.cell:first-child{
    padding: 0 14px;
}
.views{
    display: flex;
    align-items: center;
    gap: 2px;
    margin-left: auto;
    padding-right: 8px;
    border-right: 1px solid #d8d8d8;
}
.views button{
    width: 24px;
    height: 24px;
    border-radius: 3px;
}
.views .drop{
    gap: 3px;
    width: 32px;
}
.zoom{
    display: flex;
    align-items: center;
    padding-left: 10px;
}
.percent{
    gap: 5px;
    margin-right: 11px;
}
.zoom input{
    appearance: none;
    width: 142px;
    height: 16px;
    margin: 0 8px 0 10px;
    background:
        linear-gradient(#777, #777) 68px 5px / 1px 6px no-repeat,
        linear-gradient(#666, #666) center / 100% 1px no-repeat;
}
.zoom input::-webkit-slider-thumb{
    appearance: none;
    width: 12px;
    height: 12px;
    border: 1px solid #555;
    border-radius: 50%;
    background-color: #f0f0f0;
}

/* watermarks lying over the screen */
.baidu{
    position: absolute;
    right: 60px;
    bottom: 24px;
    color: rgba(255,255,255,0.85);
}
.logo{
    display: flex;
    align-items: flex-end;
    font-family: "Liberation Sans", "Noto Sans CJK SC", sans-serif;
    font-size: 42px;
    font-weight: bold;
    line-height: 42px;
    -webkit-text-stroke: 1px #ccc;
}
.logo svg{
    margin: 0 -2px 2px -18px;
    stroke: #ccc;
}
.paw{
    fill: rgba(255,255,255,0.85);
}
.logo text{
    fill: white;
    font-size: 26px;
    stroke: #ccc;
}
.logo .cn{
    font-size: 33px;
}
.url{
    font-family: "Open Sans", sans-serif;
    font-size: 22px;
    line-height: 26px;
    text-shadow: 0 0 2px #aaa;
}
.site-mark{
    position: absolute;
    right: 40px;
    bottom: 15px;
    font-family: "Noto Sans CJK SC", sans-serif;
    font-size: 24px;
    font-weight: bold;
    font-style: italic;
    line-height: 28px;
    color: white;
    -webkit-text-stroke: 4px #222;
    paint-order: stroke fill;
}
```
